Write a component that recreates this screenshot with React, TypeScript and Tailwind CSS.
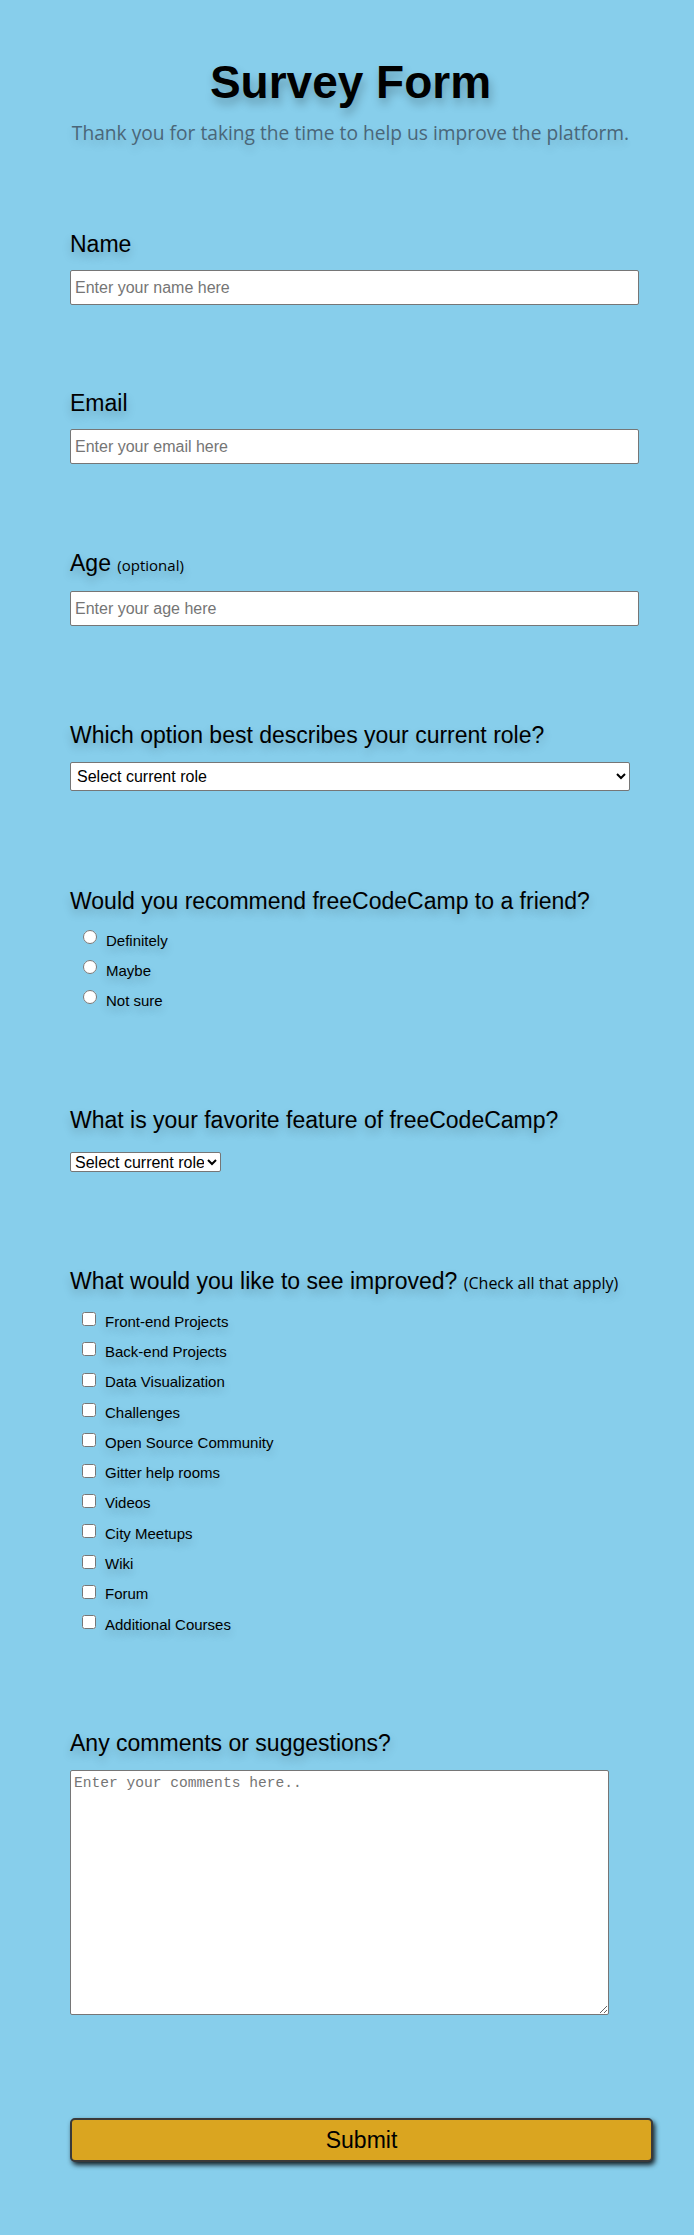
import React from "react";

const labelCls =
  "block text-[23px] leading-[26px] text-black [text-shadow:0px_5px_10px_rgba(0,0,0,0.22)]";
const comicCls = "font-['Comic_Sans_MS','Open_Sans',sans-serif]";
const inputCls =
  "block w-[569px] h-[35px] mt-[13px] px-[4px] bg-white border border-[#767676] rounded-[2px] text-[16px] text-black placeholder:text-[#757575] font-['Liberation_Sans',Arial,sans-serif]";

const recommend = ["Definitely", "Maybe", "Not sure"];
const improvements = [
  "Front-end Projects",
  "Back-end Projects",
  "Data Visualization",
  "Challenges",
  "Open Source Community",
  "Gitter help rooms",
  "Videos",
  "City Meetups",
  "Wiki",
  "Forum",
  "Additional Courses",
];

const App = () => {
  return (
    <div className="min-h-[2235px] bg-[#87CEEB] font-['Liberation_Sans',Arial,sans-serif] text-black">
      {/* Header */}
      <header className="pt-[56px] pl-[7px] text-center">
        <h1 className="text-[46px] leading-[53px] font-bold [text-shadow:2px_6px_10px_rgba(0,0,0,0.25)]">
          Survey Form
        </h1>
        <p
          className={`mt-[11px] text-[19.2px] leading-[26px] text-[#4a6678] [text-shadow:0px_5px_10px_rgba(0,0,0,0.15)] ${comicCls}`}
        >
          Thank you for taking the time to help us improve the platform.
        </p>
      </header>

      <form className="pl-[70px]" onSubmit={(e) => e.preventDefault()}>
        {/* Name */}
        <div className="mt-[85px]">
          <label htmlFor="name" className={labelCls}>
            Name
          </label>
          <input id="name" type="text" placeholder="Enter your name here" className={inputCls} />
        </div>

        {/* Email */}
        <div className="mt-[85px]">
          <label htmlFor="email" className={labelCls}>
            Email
          </label>
          <input id="email" type="email" placeholder="Enter your email here" className={inputCls} />
        </div>

        {/* Age */}
        <div className="mt-[86px]">
          <label htmlFor="age" className={labelCls}>
            Age <span className={`text-[15px] ${comicCls}`}>(optional)</span>
          </label>
          <input id="age" type="number" placeholder="Enter your age here" className={inputCls} />
        </div>

        {/* Role */}
        <div className="mt-[96px]">
          <label htmlFor="role" className={labelCls}>
            Which option best describes your current role?
          </label>
          <select
            id="role"
            className="block w-[560px] h-[29px] mt-[14px] pl-[2px] bg-white border border-[#767676] rounded-[2px] text-[16px] text-black"
            defaultValue=""
          >
            <option value="" disabled>
              Select current role
            </option>
            <option>Student</option>
            <option>Full Time Job</option>
            <option>Full Time Learner</option>
          </select>
        </div>

        {/* Recommend */}
        <div className="mt-[97px]">
          <p className={labelCls}>Would you recommend freeCodeCamp to a friend?</p>
          <div className="mt-[8px] pl-[13px]">
            {recommend.map((r) => (
              <label key={r} className="flex h-[30px] items-center">
                <input type="radio" name="recommend" className="m-0 h-[14px] w-[14px]" />
                <span className="ml-[9px] mt-[6px] text-[15px] leading-[17px] [text-shadow:0px_5px_10px_rgba(0,0,0,0.2)]">
                  {r}
                </span>
              </label>
            ))}
          </div>
        </div>

        {/* Favorite */}
        <div className="mt-[95px]">
          <label htmlFor="feature" className={labelCls}>
            What is your favorite feature of freeCodeCamp?
          </label>
          <select
            id="feature"
            className="block w-[151px] h-[20px] mt-[19px] bg-white border border-[#767676] rounded-[2px] text-[16px] leading-[18px] text-black"
            defaultValue=""
          >
            <option value="" disabled>
              Select current role
            </option>
            <option>Challenges</option>
            <option>Projects</option>
            <option>Community</option>
          </select>
        </div>

        {/* Improvements */}
        <div className="mt-[96px]">
          <p className={labelCls}>
            What would you like to see improved?{" "}
            <span className={`text-[16px] ${comicCls}`}>(Check all that apply)</span>
          </p>
          <div className="mt-[8px] pl-[12px]">
            {improvements.map((item) => (
              <label key={item} className="flex h-[30.3px] items-center">
                <input type="checkbox" className="m-0 h-[14px] w-[14px]" />
                <span className="ml-[9px] mt-[4px] text-[15px] leading-[17px] [text-shadow:0px_5px_10px_rgba(0,0,0,0.2)]">
                  {item}
                </span>
              </label>
            ))}
          </div>
        </div>

        {/* Comments */}
        <div className="mt-[93px]">
          <label htmlFor="comments" className={labelCls}>
            Any comments or suggestions?
          </label>
          <textarea
            id="comments"
            placeholder="Enter your comments here.."
            className="block w-[539px] h-[245px] mt-[14px] p-[3px] bg-white border border-[#767676] rounded-[2px] text-[14.6px] leading-[18px] font-['Liberation_Mono','DejaVu_Sans_Mono',monospace] placeholder:text-[#757575]"
          />
        </div>

        {/* Submit */}
        <button
          type="submit"
          className="mt-[103px] block w-[583px] h-[44px] bg-[#DAA520] border-2 border-[#3a3a3a] rounded-[5px] text-[23px] text-black shadow-[2px_3px_5px_rgba(0,0,0,0.85)]"
        >
          Submit
        </button>
      </form>
    </div>
  );
};

export default App;
